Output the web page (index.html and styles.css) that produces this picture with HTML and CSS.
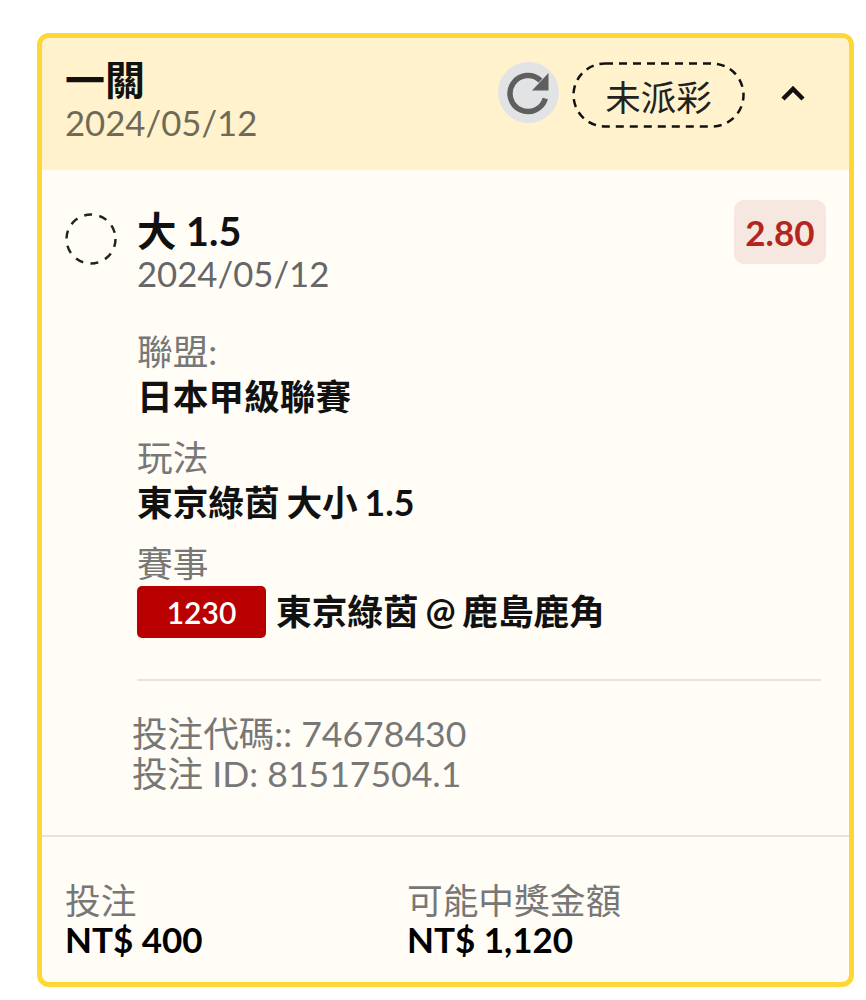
FILE: index.html
```html
<!DOCTYPE html>
<html lang="zh-Hant">
<head>
<meta charset="utf-8" />
<title>一關</title>
<link rel="stylesheet" href="styles.css">
</head>

<body>
<div class="card">
  <div class="cardhead">
    <div class="headtext">
      <div class="headtitle">一關</div>
      <div class="headdate">2024/05/12</div>
    </div>
    <div class="headright">
      <div class="refresh">
        <svg width="46" height="46" viewBox="0 0 46 46">
          <path d="M34.5 10.5 A18 18 0 1 0 39.3 28.5" fill="none" stroke="#5f5f5f" stroke-width="5.5" />
          <path d="M42.5 3 V20.5 H26 Z" fill="#5f5f5f" />
        </svg>
      </div>
      <div class="status">
        <svg class="statusline" width="173" height="66" viewBox="0 0 173 66">
          <rect x="1.5" y="1.5" width="170" height="63" rx="31.5" fill="none" stroke="#111" stroke-width="2.5" stroke-dasharray="8 6" />
        </svg>
        <span>未派彩</span>
      </div>
      <svg class="chevron" width="26" height="16" viewBox="0 0 26 16">
        <path d="M3 14 L13 4 L23 14" fill="none" stroke="#111" stroke-width="4.5" />
      </svg>
    </div>
  </div>

  <div class="cardbody">
    <div class="leg">
      <svg class="legmark" width="52" height="52" viewBox="0 0 52 52">
        <circle cx="26" cy="26" r="24.5" fill="none" stroke="#222" stroke-width="2.5" stroke-dasharray="8 7.4" />
      </svg>
      <div class="legmain">
        <div class="legtop">
          <div>
            <div class="legname">大 1.5</div>
            <div class="legdate">2024/05/12</div>
          </div>
          <div class="odds">2.80</div>
        </div>

        <div class="field">
          <div class="fieldlabel">聯盟:</div>
          <div class="fieldvalue">日本甲級聯賽</div>
        </div>
        <div class="field">
          <div class="fieldlabel">玩法</div>
          <div class="fieldvalue">東京綠茵 大小 1.5</div>
        </div>
        <div class="field">
          <div class="fieldlabel">賽事</div>
          <div class="matchrow">
            <span class="matchcode">1230</span>
            <span class="fieldvalue">東京綠茵 @ 鹿島鹿角</span>
          </div>
        </div>
        <div class="legline"></div>
      </div>
    </div>

    <div class="codes">
      <div>投注代碼:: 74678430</div>
      <div>投注 ID: 81517504.1</div>
    </div>
  </div>

  <div class="cardfoot">
    <div class="footcol">
      <div class="footlabel">投注</div>
      <div class="footvalue">NT$ 400</div>
    </div>
    <div class="footcol">
      <div class="footlabel">可能中獎金額</div>
      <div class="footvalue">NT$ 1,120</div>
    </div>
  </div>
</div>
</body>
</html>
```

FILE: styles.css
```css
html, body {
  background: #fff;
}

body {
  margin: 0;
  padding: 33px 12px 13px 37px;
  font-family: Lato, "Noto Sans CJK TC", sans-serif;
}

.card {
  background: #fffdf6;
  border: solid 5px #fdd835;
  border-radius: 12px;
  box-sizing: border-box;
  display: flex;
  flex-direction: column;
  height: 954px;
  overflow: hidden;
  width: 817px;
}

.cardhead {
  align-items: flex-start;
  background: #fff2cc;
  box-sizing: border-box;
  display: flex;
  flex: none;
  height: 132px;
  justify-content: space-between;
  padding: 20px 43px 0 23px;
}

.headtitle {
  color: #111;
  font-size: 40px;
  font-weight: 700;
  line-height: 44px;
}

.headdate {
  color: #6f6a58;
  font-size: 34.7px;
  line-height: 38px;
  margin-top: 2px;
}

.headright {
  align-items: center;
  display: flex;
  padding-top: 4px;
}

.refresh {
  align-items: center;
  background: #e2e3e5;
  border-radius: 50%;
  display: flex;
  height: 61px;
  justify-content: center;
  margin: 0 13px 5px 0;
  width: 61px;
}

.status {
  align-items: center;
  color: #222;
  display: flex;
  font-size: 35.5px;
  height: 66px;
  justify-content: center;
  margin-right: 35px;
  position: relative;
  width: 173px;
}

.statusline {
  left: 0;
  position: absolute;
  top: 0;
}

.chevron {
  margin-bottom: 5px;
}

.cardbody {
  flex: none;
  height: 665px;
  padding: 30px 23px 0 23px;
  box-sizing: border-box;
}

.leg {
  display: flex;
}

.legmark {
  flex: none;
  margin: 13px 20px 0 0;
}

.legmain {
  flex: 1;
  padding-right: 0;
}

.legtop {
  align-items: flex-start;
  display: flex;
  justify-content: space-between;
  margin-bottom: 36px;
}

.legname {
  color: #111;
  font-size: 39.5px;
  font-weight: 700;
  line-height: 48px;
  padding-top: 7px;
}

.legdate {
  color: #666;
  font-size: 34.7px;
  line-height: 38px;
}

.odds {
  background: #f6e7e0;
  border-radius: 10px;
  color: #b3261e;
  font-size: 35px;
  font-weight: 700;
  line-height: 64px;
  padding: 0 11.5px;
}

.field {
  margin-bottom: 16px;
}

.fieldlabel {
  color: #777;
  font-size: 35.7px;
  line-height: 46px;
}

.fieldvalue {
  color: #111;
  font-size: 35.7px;
  font-weight: 700;
  line-height: 44px;
  word-spacing: -2px;
}

.matchrow {
  align-items: center;
  display: flex;
  margin-top: -1px;
}

.matchcode {
  background: #b80000;
  border-radius: 5px;
  color: #fff;
  font-size: 30px;
  font-weight: 600;
  line-height: 52px;
  margin-right: 10px;
  text-align: center;
  width: 129px;
}

.legline {
  background: #e6e4dc;
  height: 2px;
  margin: 41px 5px 0 0;
}

.codes {
  color: #777;
  font-size: 35.6px;
  line-height: 40px;
  margin: 33px 0 0 67px;
}

.cardfoot {
  border-top: solid 2px #e6e4dc;
  display: flex;
  flex: 1;
  padding: 45px 0 0 23px;
}

.footcol {
  width: 342px;
}

.footlabel {
  color: #777;
  font-size: 35.7px;
  line-height: 38px;
}

.footvalue {
  color: #000;
  font-size: 35px;
  font-weight: 700;
  line-height: 38px;
}
```
